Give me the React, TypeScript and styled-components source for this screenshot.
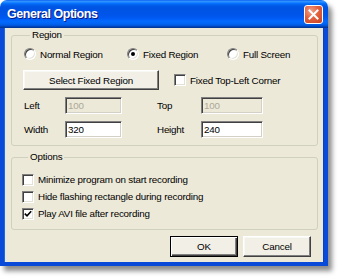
import React from "react";
import styled, { createGlobalStyle, css } from "styled-components";

const Global = createGlobalStyle`
  html, body { margin: 0; padding: 0; background: #fff; }
  body { font-family: "Liberation Sans", Arial, sans-serif; }
  * { box-sizing: border-box; }
`;

const dialogFont = css`
  font-family: "Liberation Sans", Arial, sans-serif;
  font-size: 9.8px;
  letter-spacing: -0.2px;
  color: #000;
`;

const Page = styled.div`
  width: 340px;
  height: 278px;
  background: #fff;
  overflow: hidden;
`;

const Window = styled.div`
  width: 328px;
  height: 266px;
  display: flex;
  flex-direction: column;
  border-radius: 7px 7px 0 0;
  box-shadow: 4px 5px 5px rgba(0, 0, 0, 0.45);
`;

const TitleBar = styled.div`
  height: 28px;
  flex: none;
  display: flex;
  align-items: center;
  justify-content: space-between;
  padding: 0 5px 0 7px;
  border-radius: 7px 7px 0 0;
  background: linear-gradient(
    to bottom,
    #0058ee 0%,
    #3593ff 4%,
    #288eff 7%,
    #127dff 10%,
    #036ffc 13%,
    #0262ee 17%,
    #0057e5 23%,
    #0054e3 30%,
    #0055eb 56%,
    #005bf5 66%,
    #026afe 76%,
    #0062ef 86%,
    #0052d6 92%,
    #0040ab 96%,
    #003092 100%
  );
`;

const Title = styled.span`
  color: #fff;
  font-family: "Liberation Sans", Arial, sans-serif;
  font-weight: bold;
  font-size: 12.5px;
  letter-spacing: -0.45px;
  text-shadow: 1px 1px 0 #0a1883;
`;

const CloseButton = styled.div`
  width: 19px;
  height: 19px;
  border: 1px solid #fff;
  border-radius: 3px;
  background: radial-gradient(circle at 35% 30%, #f0a08a 0%, #e2613f 45%, #c8401e 100%);
  display: flex;
  align-items: center;
  justify-content: center;
`;

const Frame = styled.div`
  flex: 1;
  display: flex;
  flex-direction: column;
  background: #ece9d8;
  border: 4px solid #0a4ad9;
  border-top: 0;
  box-shadow: inset 1px 0 0 #166aee, inset -1px 0 0 #0842c4;
`;

const Group = styled.fieldset<{ $mt: number; $pl: number }>`
  margin: ${(p) => p.$mt}px 6px 0 7px;
  padding: 0 0 7px ${(p) => p.$pl}px;
  border: 1px solid #d0d0bf;
  border-radius: 3px;
  min-width: 0;
`;

const Legend = styled.legend`
  ${dialogFont};
  margin-left: 6px;
  padding: 0 2px;
  line-height: 12px;
`;

const RadioRow = styled.div`
  display: grid;
  grid-template-columns: 103px 100px auto;
  padding-top: 6px;
  height: 20px;
  align-items: center;
`;

const Choice = styled.label`
  ${dialogFont};
  display: flex;
  align-items: center;
  gap: 4px;
  height: 14px;
  white-space: nowrap;
`;

const RadioCircle = styled.span<{ $on?: boolean }>`
  width: 12px;
  height: 12px;
  flex: none;
  border-radius: 50%;
  background: #fff;
  border: 1px solid;
  border-color: #808080 #fff #fff #808080;
  box-shadow: inset 1px 1px 0 #404040, inset -1px -1px 0 #e4e2d8;
  display: flex;
  align-items: center;
  justify-content: center;
  &::after {
    content: "";
    width: 4px;
    height: 4px;
    border-radius: 50%;
    background: #000;
    display: ${(p) => (p.$on ? "block" : "none")};
  }
`;

const Box = styled.span`
  width: 12px;
  height: 12px;
  flex: none;
  background: #fff;
  border: 1px solid;
  border-color: #808080 #fff #fff #808080;
  box-shadow: inset 1px 1px 0 #404040, inset -1px -1px 0 #e4e2d8;
  display: flex;
  align-items: center;
  justify-content: center;
`;

const ActionRow = styled.div`
  display: flex;
  align-items: center;
  margin-top: 9px;
  margin-left: -1px;
  gap: 15px;
`;

const PushButton = styled.button<{ $w: number; $h: number; $default?: boolean }>`
  ${dialogFont};
  width: ${(p) => p.$w}px;
  height: ${(p) => p.$h}px;
  padding: 0;
  background: #f1efe6;
  border: 1px solid;
  border-color: ${(p) => (p.$default ? "#000" : "#fff #404040 #404040 #fff")};
  box-shadow: ${(p) =>
    p.$default
      ? "inset 1px 1px 0 #fff, inset -1px -1px 0 #404040, inset -2px -2px 0 #808080"
      : "inset -1px -1px 0 #808080, inset 1px 1px 0 #f8f8f4"};
`;

const FieldGrid = styled.div`
  display: grid;
  grid-template-columns: 41px 57px 35px 44px 62px;
  grid-auto-rows: 17px;
  row-gap: 7px;
  margin-top: 7px;
  align-items: center;
`;

const FieldLabel = styled.span`
  ${dialogFont};
`;

const Field = styled.input`
  ${dialogFont};
  width: 100%;
  height: 17px;
  padding: 0 0 0 2px;
  background: #fff;
  border: 1px solid;
  border-color: #808080 #fff #fff #808080;
  box-shadow: inset 1px 1px 0 #404040, inset -1px -1px 0 #d4d0c8;
  outline: none;
  &:disabled {
    color: #aca899;
    background: #ece9d8;
  }
`;

const OptionList = styled.div`
  display: flex;
  flex-direction: column;
  padding-top: 8px;
`;

const OptionRow = styled.label`
  ${dialogFont};
  display: flex;
  align-items: center;
  gap: 4px;
  height: 17px;
  white-space: nowrap;
`;

const Footer = styled.div`
  display: flex;
  justify-content: flex-end;
  gap: 5px;
  margin-top: 6px;
  padding-right: 13px;
`;

const Radio = ({ on, children }: { on?: boolean; children: React.ReactNode }) => (
  <Choice>
    <RadioCircle $on={on} />
    {children}
  </Choice>
);

const Check = ({ on }: { on?: boolean }) => (
  <Box>
    {on && (
      <svg width="8" height="8" viewBox="0 0 8 8">
        <path d="M0.8 3.6 L3 5.8 L7.2 1.2" fill="none" stroke="#000" strokeWidth="1.6" />
      </svg>
    )}
  </Box>
);

export default function App() {
  return (
    <Page>
      <Global />
      <Window>
        <TitleBar>
          <Title>General Options</Title>
          <CloseButton>
            <svg width="11" height="11" viewBox="0 0 11 11">
              <path d="M1.5 1.5 L9.5 9.5 M9.5 1.5 L1.5 9.5" stroke="#fff" strokeWidth="2" strokeLinecap="square" />
            </svg>
          </CloseButton>
        </TitleBar>
        <Frame>
          <Group $mt={1} $pl={12}>
            <Legend>Region</Legend>
            <RadioRow>
              <Radio>Normal Region</Radio>
              <Radio on>Fixed Region</Radio>
              <Radio>Full Screen</Radio>
            </RadioRow>
            <ActionRow>
              <PushButton $w={136} $h={20}>Select Fixed Region</PushButton>
              <Choice>
                <Check />
                Fixed Top-Left Corner
              </Choice>
            </ActionRow>
            <FieldGrid>
              <FieldLabel>Left</FieldLabel>
              <Field disabled defaultValue="100" />
              <span />
              <FieldLabel>Top</FieldLabel>
              <Field disabled defaultValue="100" />
              <FieldLabel>Width</FieldLabel>
              <Field defaultValue="320" />
              <span />
              <FieldLabel>Height</FieldLabel>
              <Field defaultValue="240" />
            </FieldGrid>
          </Group>
          <Group $mt={5} $pl={10}>
            <Legend>Options</Legend>
            <OptionList>
              <OptionRow>
                <Check />
                Minimize program on start recording
              </OptionRow>
              <OptionRow>
                <Check />
                Hide flashing rectangle during recording
              </OptionRow>
              <OptionRow>
                <Check on />
                Play AVI file after recording
              </OptionRow>
            </OptionList>
          </Group>
          <Footer>
            <PushButton $w={68} $h={21} $default>OK</PushButton>
            <PushButton $w={68} $h={21}>Cancel</PushButton>
          </Footer>
        </Frame>
      </Window>
    </Page>
  );
}
